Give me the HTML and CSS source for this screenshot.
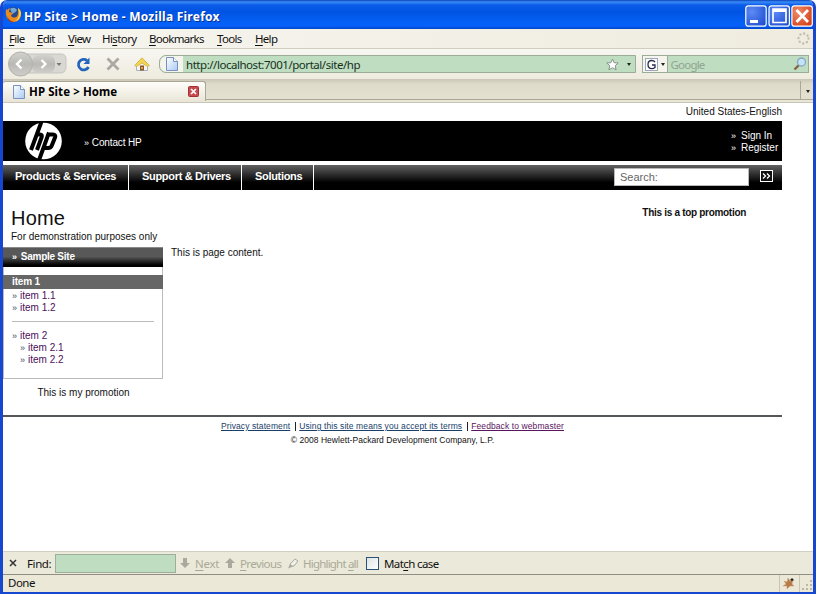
FILE: index.html
```html
<!DOCTYPE html>
<html lang="en">
<head>
<meta charset="utf-8">
<title>HP Site &gt; Home - Mozilla Firefox</title>
<link rel="stylesheet" href="styles.css">
</head>
<body>
<svg class="defs" width="0" height="0">
  <defs>
    <linearGradient id="pg" x2="1" y2="1"><stop offset="0" stop-color="#fff"/><stop offset="1" stop-color="#a9caf5"/></linearGradient>
    <radialGradient id="bl" cx=".3" cy=".3" r=".9"><stop offset="0" stop-color="#5d8bf5"/><stop offset="1" stop-color="#1c4bd0"/></radialGradient>
    <radialGradient id="rd" cx=".3" cy=".3" r=".9"><stop offset="0" stop-color="#f08a68"/><stop offset="1" stop-color="#d03a12"/></radialGradient>
    <linearGradient id="gr" x2="0" y2="1"><stop offset="0" stop-color="#d2d1cd"/><stop offset=".5" stop-color="#b9b9b6"/><stop offset="1" stop-color="#cfcecb"/></linearGradient>
    <symbol id="page" viewBox="0 0 12 14"><path d="M.5 .5H7.500L11.500 4.500V13.500H.5Z" fill="url(#pg)" stroke="#7891bd"/><path d="M7.500 .5V4.500H11.500" fill="#fff" stroke="#7891bd"/></symbol>
  </defs>
</svg>
<div class="window">
  <header class="titlebar">
    <svg class="fox" width="17" height="17" viewBox="0 0 17 17"><circle cx="8.500" cy="8" r="7" fill="#274a8c"/><path d="M5 3Q9 0 12 4Q10 8 7 7Z" fill="#70a9d8"/><path d="M1 3Q0 8 2 12Q5 16.500 9 16Q16 15 16 8Q16 4 13 2Q14 5 13 8Q12 12 8.500 11.500Q6 11 6 9L8.500 7.500Q6 6 4 6Q4 4 5 2Q3 2.500 2.500 4Z" fill="#ec8a1c"/><path d="M13 2Q16 4 16 8Q15 14 10 15Q14 12 14 8Z" fill="#fbd24b"/><path d="M2 10Q4 15 9 16Q5 17 3 13.500Z" fill="#a83518"/></svg>
    <h1>HP Site &gt; Home - Mozilla Firefox</h1>
    <svg class="winbtns" width="68" height="22" viewBox="0 0 68 22"><g stroke="#fff" stroke-width="1.200"><rect x=".8" y=".8" width="20.400" height="20.400" rx="2.500" fill="url(#bl)"/><rect x="24" y=".8" width="20.400" height="20.400" rx="2.500" fill="url(#bl)"/><rect x="46.900" y=".8" width="20.400" height="20.400" rx="2.500" fill="url(#rd)"/></g><path d="M5 16.500H13" stroke="#fff" stroke-width="3"/><path d="M28 5.500H41" stroke="#fff" stroke-width="3"/><path d="M28 4H41V17.500H28Z" fill="none" stroke="#fff" stroke-width="1.700"/><path d="M51.500 5L63 17M63 5L51.500 17" stroke="#fff" stroke-width="2.800"/></svg>
  </header>
  <nav class="menubar">
    <span class="m-file"><u>F</u>ile</span><span class="m-edit"><u>E</u>dit</span><span class="m-view"><u>V</u>iew</span><span class="m-hist">Hi<u>s</u>tory</span><span class="m-book"><u>B</u>ookmarks</span><span class="m-tool"><u>T</u>ools</span><span class="m-help"><u>H</u>elp</span>
    <svg class="throb" width="13" height="13" viewBox="0 0 13 13"><circle cx="6.500" cy="6.500" r="5" fill="none" stroke="#c0beb5" stroke-width="2.400" stroke-linecap="round" stroke-dasharray=".1 3.827"/></svg>
  </nav>
  <div class="toolbar">
    <svg class="nav-ic" width="62" height="26" viewBox="0 0 62 26"><path d="M16 3H54Q59 3 59 8V16Q59 22 53 22H16Z" fill="#d9d8d3" stroke="#c6c5bf"/><rect x="25" y="4" width="23" height="18" rx="7" fill="url(#gr)"/><circle cx="13.500" cy="13" r="12" fill="url(#gr)" stroke="#b2b1ac"/><path d="M14.500 8.500L10 13L14.500 17.500M34.500 9L38.500 13L34.500 17" fill="none" stroke="#fff" stroke-width="2.400"/><path d="M49.500 12H54.500L52 15Z" fill="#777"/></svg>
    <svg class="reload" width="15" height="15" viewBox="0 0 15 15"><path d="M12.500 10A5.300 5.300 0 1 1 11 3.400" fill="none" stroke="#2464bd" stroke-width="2.800"/><path d="M13.500 .5V7H7.500Z" fill="#2464bd"/></svg>
    <svg class="stop" width="14" height="14" viewBox="0 0 14 14"><path d="M1.500 1.500L12.500 12.500M12.500 1.500L1.500 12.500" stroke="#a9a8a3" stroke-width="2.800"/></svg>
    <svg class="house" width="16" height="14" viewBox="0 0 16 14"><path d="M2.500 7V13.500H13.500V7L8 2Z" fill="#f5f4ef" stroke="#a7b2c7"/><path d="M.7 8.500L8 .8L15.300 8.500L13.500 9.500L8 6L2.500 9.500Z" fill="#f3d650" stroke="#c5a53c" stroke-width=".7"/><path d="M6 13.500V8.500H10V13.500Z" fill="#87562c"/><path d="M7 10H9V12H7Z" fill="#dca53e"/></svg>
    <div class="url">
      <span class="site-id"><svg width="12" height="14"><use href="#page"/></svg></span>
      <span class="url-text">http://localhost:7001/portal/site/hp</span>
      <svg class="star" width="13" height="13" viewBox="0 0 13 13"><path d="M6.500 1L8.100 4.700L12.200 5L9.200 7.700L10.100 11.900L6.500 9.700L2.900 11.900L3.800 7.700L.8 5L4.900 4.700Z" fill="#fff" stroke="#87938a"/></svg>
      <i class="caret"></i>
    </div>
    <div class="google">
      <span class="engine"><svg width="13" height="13" viewBox="0 0 13 13"><rect x=".5" y=".5" width="12" height="12" fill="#fff" stroke="#9ba6c6"/><path d="M0 3V0H5M13 9V13H9" fill="none" stroke="#9ab386"/><path d="M10 4.200Q9 2.500 6.700 2.500Q3 2.500 3 6.500Q3 10.600 6.700 10.600Q8.800 10.600 10 9.500V7H7" fill="none" stroke="#29294d" stroke-width="1.300"/></svg><i class="caret"></i></span>
      <span class="g-text">Google</span>
      <svg width="14" height="14" viewBox="0 0 14 14"><path d="M6 8L1.500 12.500" stroke="#84634b" stroke-width="2.400"/><circle cx="8.500" cy="5" r="4" fill="#c2e3fa" stroke="#88a7c2" stroke-width="1.300"/></svg>
    </div>
  </div>
  <div class="tabs">
    <div class="tab"><svg width="12" height="14"><use href="#page"/></svg><b>HP Site &gt; Home</b><svg class="tab-x" width="11" height="11" viewBox="0 0 11 11"><rect x=".5" y=".5" width="10" height="10" rx="1" fill="#c74a4e" stroke="#a72f37"/><path d="M3 3L8 8M8 3L3 8" stroke="#fff" stroke-width="1.700"/></svg></div>
    <div class="alltabs"><i class="caret"></i></div>
  </div>
  <main class="page">
    <div class="locale">United States-English</div>
    <div class="brand">
      <svg class="hp" width="38" height="40" viewBox="0 0 38 40"><circle cx="19.500" cy="20" r="18.300" fill="#fff"/><g fill="none" stroke="#000" stroke-width="4"><path d="M18.500 -2L7 29M11.500 13.500H16Q18.500 13.500 17.500 16.500L13 29"/><path d="M25 11.500L14 42M24 13.500H29Q32 13.500 31 16.500L27.800 24.500Q27 27 24 27H20"/></g></svg>
      <span class="contact"><i class="q">»</i>Contact HP</span>
      <div class="account"><div><i class="q">»</i>Sign In</div><div><i class="q">»</i>Register</div></div>
    </div>
    <div class="mainnav">
      <b class="n1"><span>Products &amp; Services</span></b><b class="n2"><span>Support &amp; Drivers</span></b><b class="n3"><span>Solutions</span></b>
      <span class="search">Search:</span>
      <svg class="go" width="13" height="12" viewBox="0 0 13 12"><rect x=".5" y=".5" width="12" height="11" fill="#111" stroke="#fff"/><path d="M3 3.500L5.500 6L3 8.500M7 3.500L9.500 6L7 8.500" fill="none" stroke="#fff" stroke-width="1.300"/></svg>
    </div>
    <div class="headrow">
      <div><h2>Home</h2><p class="sub">For demonstration purposes only</p></div>
      <b class="toppromo">This is a top promotion</b>
    </div>
    <div class="cols">
      <aside>
        <div class="side">
          <div class="side-title"><i class="q">»</i>Sample Site</div>
          <div class="side-cur">item 1</div>
          <div class="lnk"><i class="q">»</i>item 1.1</div>
          <div class="lnk"><i class="q">»</i>item 1.2</div>
          <hr>
          <div class="lnk"><i class="q">»</i>item 2</div>
          <div class="lnk in"><i class="q">»</i>item 2.1</div>
          <div class="lnk in"><i class="q">»</i>item 2.2</div>
        </div>
        <p class="mypromo">This is my promotion</p>
      </aside>
      <p class="content">This is page content.</p>
    </div>
    <footer>
      <div class="flinks"><a>Privacy statement</a><i></i><a class="f2">Using this site means you accept its terms</a><i></i><a class="f3">Feedback to webmaster</a></div>
      <div class="copy">© 2008 Hewlett-Packard Development Company, L.P.</div>
    </footer>
  </main>
  <div class="findbar">
    <svg class="fx" width="8" height="8" viewBox="0 0 8 8"><path d="M1 1L7 7M7 1L1 7" stroke="#333" stroke-width="1.500"/></svg>
    <span class="f-label">Find:</span>
    <span class="f-input"></span>
    <svg class="dn" width="10" height="10" viewBox="0 0 10 10"><path d="M3 0H7V5H10L5 10L0 5H3Z" fill="#aaa99e"/></svg>
    <span class="f-next"><u>N</u>ext</span>
    <svg class="up" width="10" height="10" viewBox="0 0 10 10"><path d="M3 10H7V5H10L5 0L0 5H3Z" fill="#aaa99e"/></svg>
    <span class="f-prev"><u>P</u>revious</span>
    <svg class="pen" width="11" height="11" viewBox="0 0 11 11"><path d="M2 6L7 1L10 3L6 8L3 8Z" fill="#f1f0e8" stroke="#aaa99e"/><path d="M0 10.500L2 6L5 8.500Z" fill="#aaa99e"/></svg>
    <span class="f-hl">Highlight <u>a</u>ll</span>
    <span class="box"></span>
    <span class="f-mc">Mat<u>c</u>h case</span>
  </div>
  <div class="status">
    <span>Done</span>
    <span class="addon"><svg width="15" height="15" viewBox="0 0 15 15"><path d="M2 5L5 6L6 2L8 5L11 4L10 8L12 10L8 10L5 13L5 10L1 10L4 8Z" fill="#b77a4a" stroke="#d2a27a" stroke-width=".6"/><path d="M8 4L10 2L12 4L10 5Z" fill="#222"/></svg></span>
    <svg class="grip" width="11" height="11" viewBox="0 0 11 11"><path d="M8 0h2v2h-2zM8 4h2v2h-2zM8 8h2v2h-2zM4 4h2v2h-2zM4 8h2v2h-2zM0 8h2v2h-2z" fill="#bcb8a5"/></svg>
  </div>
</div>
</body>
</html>
```
FILE: styles.css
```css
* { box-sizing: border-box; }
body { margin: 0; background: #fff; font-family: "Noto Sans", "Open Sans", sans-serif; font-size: 11.500px; color: #111; overflow: hidden; }
.defs { display: block; height: 0; }
svg { display: block; flex: none; }
h1, h2, p { margin: 0; font-weight: normal; }
span, b, div { white-space: nowrap; }
i { font-style: normal; }
u { text-underline-offset: 2px; text-decoration-thickness: 1px; }

.window { width: 816px; height: 594px; display: flex; flex-direction: column; border: solid #1647d0; border-width: 0 3px 2px; border-radius: 7px 7px 0 0; overflow: hidden; background: #ece9d8; }
.titlebar { height: 29px; flex: none; margin: 0 -3px; padding: 4px 3px 0 5px; display: flex; background: linear-gradient(#0a43b8 0, #3a8cf8 2px, #0a5be8 5px, #0054e3 12px, #0560f5 22px, #0660fa 26px, #0046c8 29px); }
.fox { margin-top: 2px; }
.titlebar h1 { margin-left: 2px; font: bold 12px/25px "Noto Sans", sans-serif; color: #fff; text-shadow: 1px 1px #0b318f; letter-spacing: .24px; }
.winbtns { margin-left: auto; margin-top: 1px; }

.menubar { height: 20px; flex: none; display: flex; padding-left: 6px; line-height: 19px; background: linear-gradient(90deg, #f6f5ef, #efecdf); border-bottom: 1px solid #d0cebf; }
.menubar span { letter-spacing: -.7px; }
.menubar .m-hist { letter-spacing: -.6px; }
.m-file { width: 28px; }
.m-edit { width: 31px; }
.m-view { width: 34px; }
.m-hist { width: 47px; }
.m-book { width: 68px; }
.m-tool { width: 38px; }
.throb { margin: 3px 3px 0 auto; }

.toolbar { height: 30px; flex: none; display: flex; align-items: center; padding: 0 4px; background: linear-gradient(#f7f6f1, #eeebde); }
.reload { margin-left: 7px; }
.stop { margin-left: 15px; }
.house { margin-left: 14px; }
.url { margin-left: 9px; width: 478px; height: 18px; display: flex; align-items: center; background: #bfddc0; border: 1px solid #9dac99; border-radius: 7px 0 0 7px; padding-right: 4px; }
.site-id { width: 23px; height: 16px; background: #f5f4ed; border-radius: 7px 0 0 7px; padding: 1px 0 0 6px; }
.url-text { margin-left: 3px; font-size: 11.500px; letter-spacing: -.46px; color: #16301c; }
.star { margin-left: auto; margin-right: 8px; }
.caret { width: 0; height: 0; border: 2px solid transparent; border-top: 3px solid #222; border-bottom: 0; }
.google { margin-left: 6px; width: 168px; height: 18px; display: flex; align-items: center; background: #bfddc0; border: 1px solid #9dac99; padding-right: 1px; }
.engine { width: 25px; height: 16px; display: flex; align-items: center; gap: 3px; padding-left: 2px; background: #f5f4ed; border-right: 1px solid #9dac99; }
.g-text { margin-left: 3px; margin-right: auto; color: #91a592; letter-spacing: -.8px; }

.tabs { height: 24px; flex: none; display: flex; justify-content: space-between; padding-top: 2px; background: linear-gradient(#c9c6b7, #dedbcb 5px, #e4e1d0 20px, #aaa795 20px, #aaa795 21px, #e9e6d8 21px, #e9e6d8 23px, #c9c6b8 23px); }
.tab { width: 203px; height: 20px; display: flex; align-items: center; padding: 0 6px 0 10px; background: linear-gradient(#fffefa, #e9e6d8); border: 1px solid #aaa795; border-width: 1px 1px 0 0; border-radius: 3px 3px 0 0; }
.tab b { margin-left: 4px; font-size: 11.500px; letter-spacing: .08px; color: #000; }
.tab-x { margin-left: auto; }
.alltabs { width: 13px; height: 19px; border-left: 1px solid #aaa795; padding: 9px 0 0 5px; }
.alltabs .caret { display: block; }

.page { height: 448px; flex: none; background: #fff; padding-right: 31px; font-family: "Liberation Sans", Arial, sans-serif; font-size: 10px; line-height: 12px; color: #111; }
.locale { height: 18px; text-align: right; padding-top: 3px; }
.brand { height: 40px; display: flex; background: #000; color: #fff; padding-left: 21px; }
.q { font-size: 9px; }
.contact { margin: 16px 0 0 22px; letter-spacing: -.15px; }
.contact .q { margin-right: 3px; }
.account { width: 50px; margin: 9px 1px 0 auto; }
.account .q { margin-right: 5px; }
.mainnav { height: 25px; margin-top: 4px; display: flex; background: linear-gradient(#626262, #000 70%); color: #fff; }
.mainnav b { height: 25px; font-size: 11px; line-height: 23px; padding-left: 12px; border-right: 1px solid #fff; letter-spacing: -.31px; }
.n1 { width: 126px; }
.n2 { width: 113px; }
.n3 { width: 72px; }
.mainnav .n3, .mainnav .n2 { padding-left: 13px; }
.search { width: 135px; height: 18px; margin: 3px 0 0 auto; background: #fff; border: 1px solid #b8b8b8; color: #666; font-size: 11px; line-height: 17px; padding-left: 5px; }
.go { margin: 5px 9px 0 11px; }
.headrow { height: 57px; display: flex; justify-content: space-between; padding: 17px 36px 0 8px; }
h2 { font-size: 20px; line-height: 22px; height: 24px; letter-spacing: .2px; }
.toppromo { letter-spacing: -.3px; }
.cols { display: flex; height: 168px; }
aside { width: 160px; }
.side { height: 132px; border: 1px solid #bbb; border-top: 0; }
.side-title { height: 20px; margin: 0 -1px 8px; padding: 0 0 0 9px; line-height: 18px; font-weight: bold; letter-spacing: -.25px; color: #fff; background: linear-gradient(#585858 45%, #000 90%); border-top: 1px solid #888; }
.side-title .q { margin-right: 4px; }
.side-cur { height: 14px; margin: 0 -1px; padding-left: 9px; line-height: 14px; font-weight: bold; letter-spacing: -.15px; color: #fff; background: #666; }
.lnk { padding-left: 8px; color: #4e0f5c; }
.lnk .q { color: #3b4c5c; margin-right: 3px; }
.side-cur + .lnk { margin-top: 1px; }
.lnk.in { padding-left: 16px; }
hr { margin: 7px 8px 8px; border: 0; border-top: 1px solid #bbb; }
.mypromo { text-align: center; padding: 8px 0 0 1px; }
.content { padding: 0 0 0 8px; }
footer { border-top: 2px solid #55585a; font-size: 8.500px; line-height: 11px; }
.flinks { display: flex; justify-content: center; margin-top: 4px; color: #183e69; letter-spacing: .1px; }
.flinks a { text-decoration: underline; }
.flinks i { width: 1px; height: 9px; margin: 1px 3px 0 5px; background: #222; }
.flinks .f3 { color: #5b1460; }
.copy { margin-top: 3px; text-align: center; letter-spacing: .04px; }

.findbar { height: 24px; flex: none; display: flex; align-items: center; background: #ebe9d9; border-top: 1px solid #d2d0c3; border-bottom: 1px solid #8f8e80; letter-spacing: -.6px; color: #aaa998; }
.fx { margin-left: 6px; }
.f-label { width: 28px; margin-left: 10px; color: #111; letter-spacing: -.4px; }
.f-input { width: 121px; height: 19px; background: #bfddc0; border: 1px solid #9dae9b; }
.dn { margin-left: 4px; }
.f-next { width: 25px; margin-left: 5px; letter-spacing: -.3px; }
.up { margin-left: 5px; }
.f-prev { width: 43px; margin-left: 5px; }
.pen { margin-left: 5px; }
.f-hl { width: 57px; margin-left: 4px; letter-spacing: -.8px; }
.box { width: 13px; height: 13px; margin-left: 6px; background: linear-gradient(135deg, #dce5e4, #fff); border: 1px solid #2a5277; }
.f-mc { margin-left: 5px; color: #111; }
.status { height: 17px; flex: none; display: flex; padding-left: 5px; line-height: 16px; letter-spacing: -.5px; background: #ebe8d7; }
.addon { margin-left: auto; width: 21px; border: solid #c9c6b3; border-width: 0 1px; padding: 1px 0 0 2px; }
.grip { margin: 5px 0 0 2px; }
```
